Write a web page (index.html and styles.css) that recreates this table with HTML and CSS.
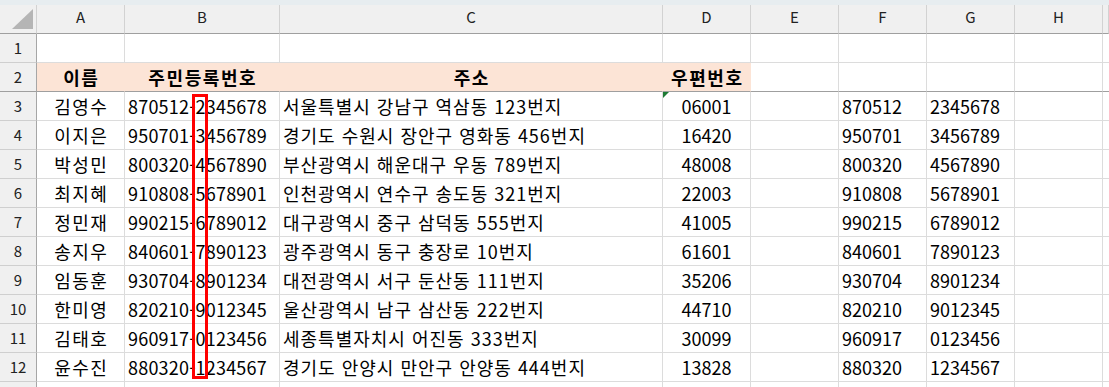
FILE: index.html
```html
<!DOCTYPE html>
<html lang="ko">
<head>
    <meta charset="UTF-8">
    <meta name="viewport" content="width=device-width, initial-scale=1.0">
    <title>주민등록번호 시트</title>
    <link rel="stylesheet" href="styles.css">
</head>
<body>
    <div class="sheet">
        <div class="ribbon-edge"></div>

        <div class="row col-heads">
            <div class="corner">
                <svg width="21" height="20" viewBox="0 0 21 20"><polygon points="21,0 21,20 0,20" fill="#b5b5b5"/></svg>
            </div>
            <div class="head">A</div>
            <div class="head">B</div>
            <div class="head">C</div>
            <div class="head">D</div>
            <div class="head">E</div>
            <div class="head">F</div>
            <div class="head">G</div>
            <div class="head">H</div>
            <div class="head"></div>
        </div>

        <div class="row">
            <div class="num">1</div>
            <div class="cell"></div><div class="cell"></div><div class="cell"></div><div class="cell"></div>
            <div class="cell"></div><div class="cell"></div><div class="cell"></div><div class="cell"></div><div class="cell"></div>
        </div>

        <div class="row frozen">
            <div class="num">2</div>
            <div class="cell title center">이름</div>
            <div class="cell title center">주민등록번호</div>
            <div class="cell title center">주소</div>
            <div class="cell title center">우편번호</div>
            <div class="cell"></div><div class="cell"></div><div class="cell"></div><div class="cell"></div><div class="cell"></div>
        </div>

        <div class="row">
            <div class="num">3</div>
            <div class="cell center name">김영수</div>
            <div class="cell rrn">870512-2345678</div>
            <div class="cell addr">서울특별시 강남구 역삼동 123번지</div>
            <div class="cell center flagged">06001<span class="flag"></span></div>
            <div class="cell"></div>
            <div class="cell">870512</div>
            <div class="cell">2345678</div>
            <div class="cell"></div><div class="cell"></div>
        </div>

        <div class="row">
            <div class="num">4</div>
            <div class="cell center name">이지은</div>
            <div class="cell rrn">950701-3456789</div>
            <div class="cell addr">경기도 수원시 장안구 영화동 456번지</div>
            <div class="cell center">16420</div>
            <div class="cell"></div>
            <div class="cell">950701</div>
            <div class="cell">3456789</div>
            <div class="cell"></div><div class="cell"></div>
        </div>

        <div class="row">
            <div class="num">5</div>
            <div class="cell center name">박성민</div>
            <div class="cell rrn">800320-4567890</div>
            <div class="cell addr">부산광역시 해운대구 우동 789번지</div>
            <div class="cell center">48008</div>
            <div class="cell"></div>
            <div class="cell">800320</div>
            <div class="cell">4567890</div>
            <div class="cell"></div><div class="cell"></div>
        </div>

        <div class="row">
            <div class="num">6</div>
            <div class="cell center name">최지혜</div>
            <div class="cell rrn">910808-5678901</div>
            <div class="cell addr">인천광역시 연수구 송도동 321번지</div>
            <div class="cell center">22003</div>
            <div class="cell"></div>
            <div class="cell">910808</div>
            <div class="cell">5678901</div>
            <div class="cell"></div><div class="cell"></div>
        </div>

        <div class="row">
            <div class="num">7</div>
            <div class="cell center name">정민재</div>
            <div class="cell rrn">990215-6789012</div>
            <div class="cell addr">대구광역시 중구 삼덕동 555번지</div>
            <div class="cell center">41005</div>
            <div class="cell"></div>
            <div class="cell">990215</div>
            <div class="cell">6789012</div>
            <div class="cell"></div><div class="cell"></div>
        </div>

        <div class="row">
            <div class="num">8</div>
            <div class="cell center name">송지우</div>
            <div class="cell rrn">840601-7890123</div>
            <div class="cell addr">광주광역시 동구 충장로 10번지</div>
            <div class="cell center">61601</div>
            <div class="cell"></div>
            <div class="cell">840601</div>
            <div class="cell">7890123</div>
            <div class="cell"></div><div class="cell"></div>
        </div>

        <div class="row">
            <div class="num">9</div>
            <div class="cell center name">임동훈</div>
            <div class="cell rrn">930704-8901234</div>
            <div class="cell addr">대전광역시 서구 둔산동 111번지</div>
            <div class="cell center">35206</div>
            <div class="cell"></div>
            <div class="cell">930704</div>
            <div class="cell">8901234</div>
            <div class="cell"></div><div class="cell"></div>
        </div>

        <div class="row">
            <div class="num">10</div>
            <div class="cell center name">한미영</div>
            <div class="cell rrn">820210-9012345</div>
            <div class="cell addr">울산광역시 남구 삼산동 222번지</div>
            <div class="cell center">44710</div>
            <div class="cell"></div>
            <div class="cell">820210</div>
            <div class="cell">9012345</div>
            <div class="cell"></div><div class="cell"></div>
        </div>

        <div class="row">
            <div class="num">11</div>
            <div class="cell center name">김태호</div>
            <div class="cell rrn">960917-0123456</div>
            <div class="cell addr">세종특별자치시 어진동 333번지</div>
            <div class="cell center">30099</div>
            <div class="cell"></div>
            <div class="cell">960917</div>
            <div class="cell">0123456</div>
            <div class="cell"></div><div class="cell"></div>
        </div>

        <div class="row">
            <div class="num">12</div>
            <div class="cell center name">윤수진</div>
            <div class="cell rrn">880320-1234567</div>
            <div class="cell addr">경기도 안양시 만안구 안양동 444번지</div>
            <div class="cell center">13828</div>
            <div class="cell"></div>
            <div class="cell">880320</div>
            <div class="cell">1234567</div>
            <div class="cell"></div><div class="cell"></div>
        </div>

        <div class="row">
            <div class="num"></div>
            <div class="cell"></div><div class="cell"></div><div class="cell"></div><div class="cell"></div>
            <div class="cell"></div><div class="cell"></div><div class="cell"></div><div class="cell"></div><div class="cell"></div>
        </div>

        <!-- highlight over the gender digit -->
        <div class="mark"></div>
    </div>
</body>
</html>
```

FILE: styles.css
```css
body {
    margin: 0;
    background: white;
    font-family: "Noto Sans CJK KR", "Noto Sans", sans-serif;
    color: #000;
    overflow: hidden;
}

.sheet {
    position: relative;
    width: 1109px;
    height: 387px;
    overflow: hidden;
}

.ribbon-edge {
    height: 5px;
    background: #e7edf0;
}

.row {
    display: grid;
    grid-template-columns: 37px 88px 155px 383px 88px 88px 88px 88px 88px 1fr;
    height: 29px;
}

.row > div {
    box-sizing: border-box;
    height: 29px;
    white-space: nowrap;
    overflow: visible;
}

.col-heads > div {
    background: #f0f0f0;
    border-right: 1px solid #d2d2d2;
    border-bottom: 1px solid #9f9f9f;
    font-size: 15px;
    line-height: 24px;
    text-align: center;
    color: #222;
}

.corner {
    display: flex;
    align-items: flex-end;
    justify-content: flex-end;
    padding: 0 3px 4px 0;
}

.corner svg {
    display: block;
}

.num {
    background: #f0f0f0;
    border-right: 1px solid #a6a6a6;
    border-bottom: 1px solid #cfcfcf;
    font-size: 15px;
    line-height: 28px;
    text-align: center;
    color: #222;
}

.cell {
    border-right: 1px solid #dcdcdc;
    border-bottom: 1px solid #dcdcdc;
    font-size: 18px;
    line-height: 28px;
    padding: 0 3px;
}

.center {
    text-align: center;
    padding: 0;
}

.name {
    letter-spacing: 1.5px;
    text-indent: 1.5px;
}

.rrn {
    letter-spacing: 0.2px;
}

.addr {
    letter-spacing: 1px;
}

.title {
    background: #fce4d6;
    border-right-color: #fce4d6;
    font-weight: bold;
    letter-spacing: 1.6px;
    text-indent: 1.6px;
}

.frozen > div {
    border-bottom-color: #9f9f9f;
}

.flagged {
    position: relative;
}

.flag {
    position: absolute;
    left: 0;
    top: 0;
    width: 0;
    height: 0;
    border-top: 6px solid #1d7b34;
    border-right: 6px solid transparent;
}

.mark {
    position: absolute;
    left: 192px;
    top: 94px;
    width: 16px;
    height: 285px;
    box-sizing: border-box;
    border: 3px solid #f00;
}
```
